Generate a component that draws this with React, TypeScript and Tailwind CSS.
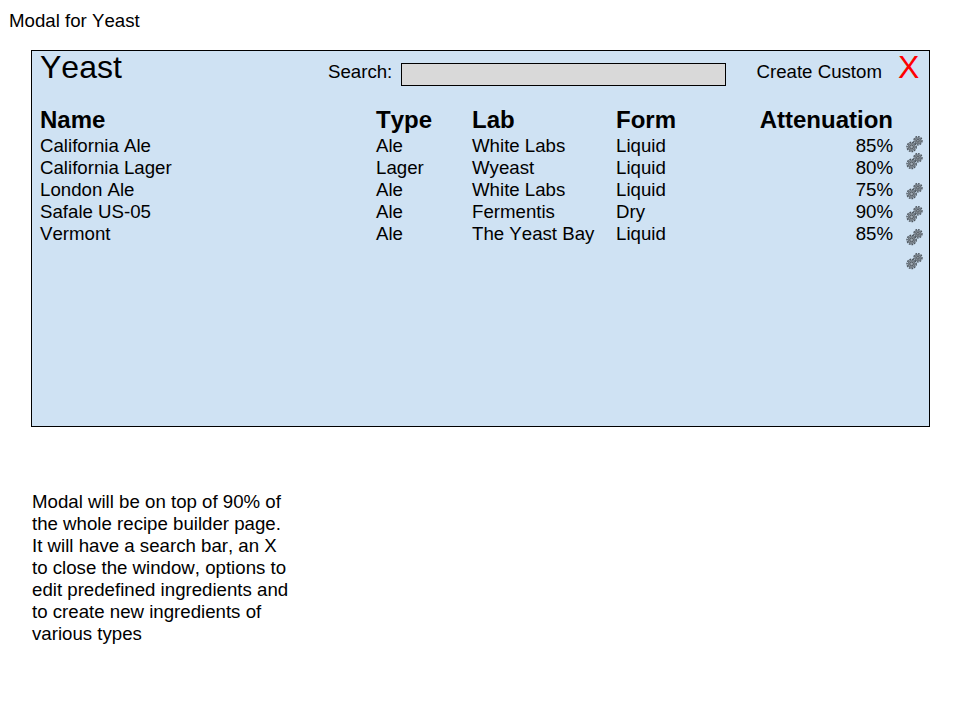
import React from "react";

type Yeast = {
  name: string;
  type: string;
  lab: string;
  form: string;
  attenuation: string;
};

const yeasts: Yeast[] = [
  { name: "California Ale", type: "Ale", lab: "White Labs", form: "Liquid", attenuation: "85%" },
  { name: "California Lager", type: "Lager", lab: "Wyeast", form: "Liquid", attenuation: "80%" },
  { name: "London Ale", type: "Ale", lab: "White Labs", form: "Liquid", attenuation: "75%" },
  { name: "Safale US-05", type: "Ale", lab: "Fermentis", form: "Dry", attenuation: "90%" },
  { name: "Vermont", type: "Ale", lab: "The Yeast Bay", form: "Liquid", attenuation: "85%" },
];

const gearMargins = ["mt-0", "mt-0", "mt-[13px]", "mt-[6px]", "mt-[6px]", "mt-[7px]"];

const columns = "grid grid-cols-[336px_96px_144px_100px_177px]";

function Gear({ x, y, r }: { x: number; y: number; r: number }) {
  return (
    <g transform={`translate(${x} ${y})`}>
      <circle r={r - 0.6} fill="none" stroke="#4d555d" strokeWidth="1.4" strokeDasharray="1.8 0.9" />
      <circle r={r - 1.6} fill="#88919a" stroke="#5b636b" strokeWidth="0.8" />
      <circle r={r - 3.4} fill="#a0aab3" stroke="#434a51" strokeWidth="0.8" />
    </g>
  );
}

function Gears() {
  return (
    <svg viewBox="0 0 17 17" className="block h-[17px] w-[17px]" aria-label="Edit">
      <Gear x={5.6} y={10.9} r={5.2} />
      <Gear x={11.9} y={4.8} r={4.7} />
    </svg>
  );
}

export default function App() {
  return (
    <div className="h-[720px] w-[960px] overflow-hidden bg-white font-['Liberation_Sans',Arial,sans-serif] text-[18.67px] leading-[22px] text-black [font-kerning:none]">
      <h1 className="pt-[10px] pl-[9px]">Modal for Yeast</h1>

      <section className="mt-[18px] ml-[31px] h-[377px] w-[899px] border border-black bg-[#cfe2f3]">
        <header className="flex h-[55px] items-start pl-2">
          <h2 className="w-[288px] text-[32px] leading-8">Yeast</h2>
          <label htmlFor="search" className="mt-[10px] w-[73px]">Search:</label>
          <input
            id="search"
            className="mt-3 h-[23px] w-[325px] border border-black bg-[#d9d9d9] px-1 outline-none"
          />
          <button className="mt-[10px] ml-[30.5px] w-[141.5px] text-left">Create Custom</button>
          <button className="text-[32px] leading-8 text-[#ff0000]">X</button>
        </header>

        <div className="flex pl-2">
          <div>
            <div className={`${columns} h-[29px] text-2xl leading-7 font-bold`}>
              <span>Name</span>
              <span>Type</span>
              <span>Lab</span>
              <span>Form</span>
              <span className="text-right">Attenuation</span>
            </div>
            {yeasts.map((y) => (
              <div key={y.name} className={columns}>
                <span>{y.name}</span>
                <span>{y.type}</span>
                <span>{y.lab}</span>
                <span>{y.form}</span>
                <span className="text-right">{y.attenuation}</span>
              </div>
            ))}
          </div>
          <div className="ml-[13px] flex flex-col pt-[30px]">
            {gearMargins.map((margin, i) => (
              <div key={i} className={margin}>
                <Gears />
              </div>
            ))}
          </div>
        </div>
      </section>

      <p className="mt-16 ml-8 w-[262px]">
        Modal will be on top of 90% of
        <br />
        the whole recipe builder page.
        <br />
        It will have a search bar, an X
        <br />
        to close the window, options to
        <br />
        edit predefined ingredients and
        <br />
        to create new ingredients of
        <br />
        various types
      </p>
    </div>
  );
}
